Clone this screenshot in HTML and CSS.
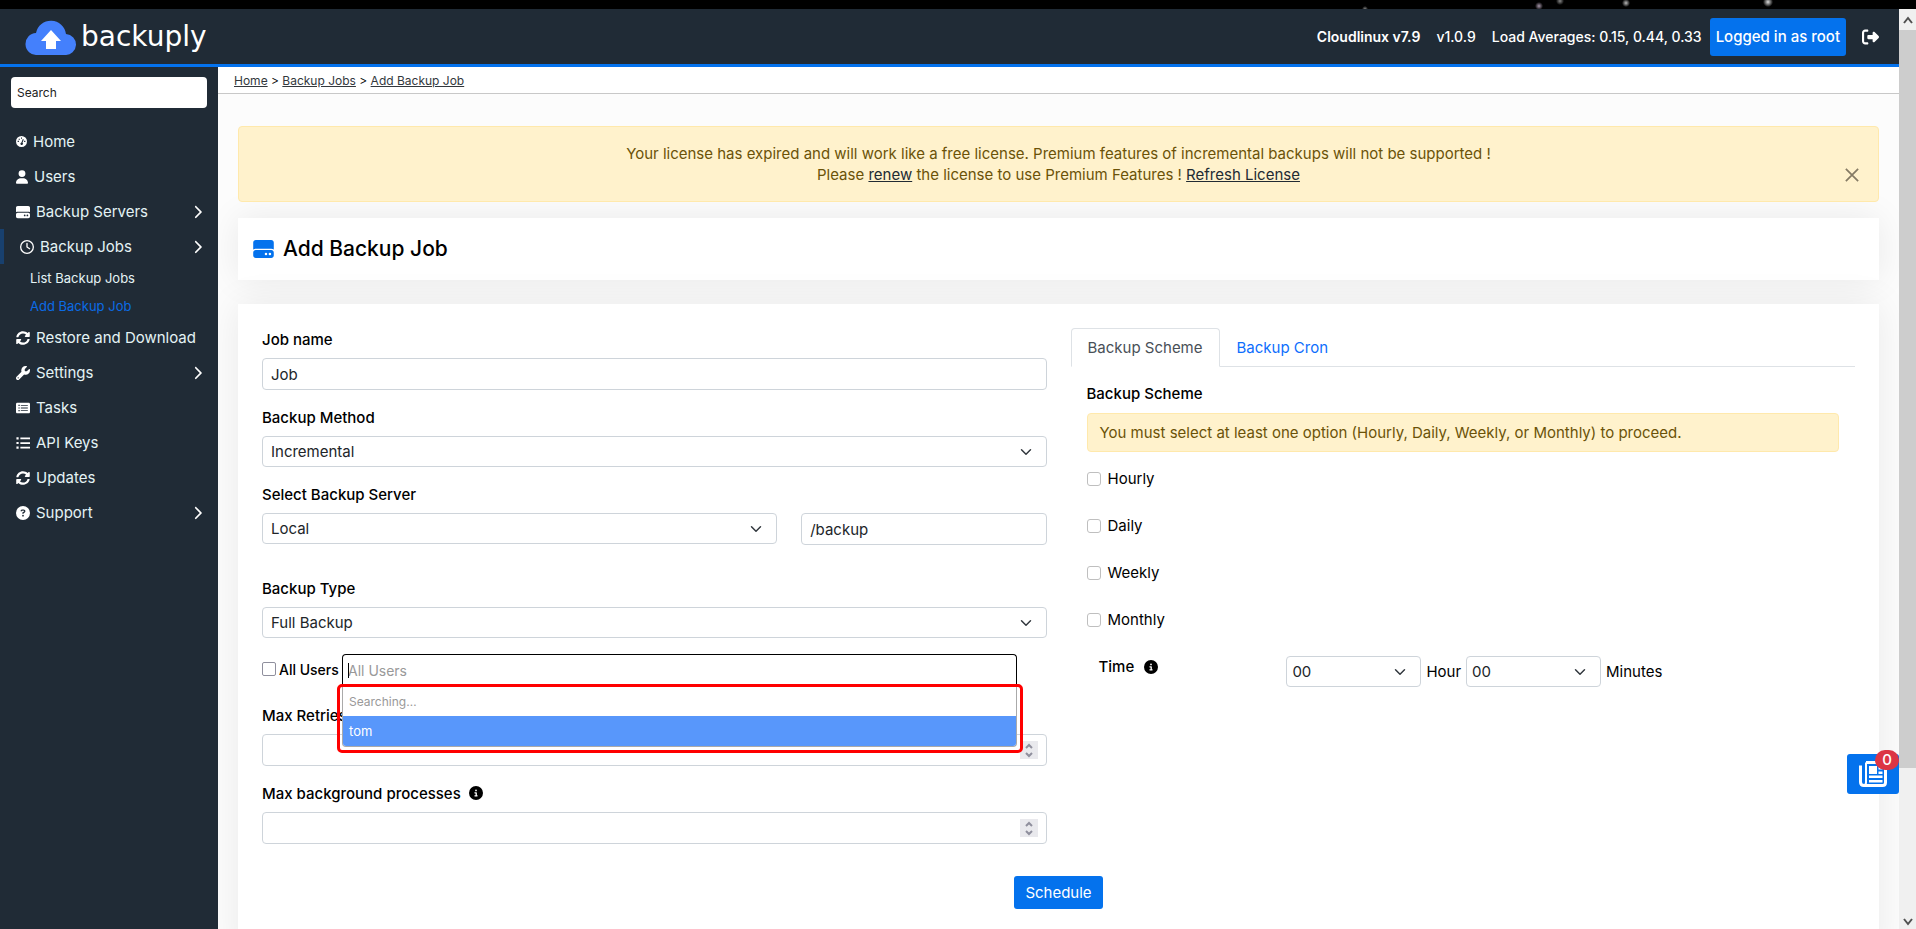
FILE: index.html
```html
<!DOCTYPE html>
<html lang="en">
<head>
<meta charset="utf-8">
<title>Backuply - Add Backup Job</title>
<link rel="stylesheet" href="styles.css">
</head>
<body>
<svg class="defs" aria-hidden="true">
  <symbol id="i-gauge" viewBox="0 0 512 512"><path fill-rule="evenodd" d="M256 0a256 256 0 1 0 0 512 256 256 0 1 0 0-512zM232 70h48v60h-48zM76 226h60v56H76zM376 226h60v56h-60zM124 124h56v56h-56zM318 140l44 22-58 150a60 60 0 1 1-52-12z"/></symbol>
  <symbol id="i-user" viewBox="0 0 448 512"><path d="M224 256A128 128 0 1 0 224 0a128 128 0 1 0 0 256zm-45.700 48C79.800 304 0 383.800 0 482.300C0 498.700 13.300 512 29.700 512l388.600 0c16.400 0 29.700-13.300 29.700-29.700C448 383.800 368.200 304 269.700 304l-91.400 0z"/></symbol>
  <symbol id="i-drive" viewBox="0 0 512 448"><path fill-rule="evenodd" d="M64 0h384c35 0 64 29 64 64v170c-18-12-40-18-64-18H64c-24 0-46 6-64 18V64C0 29 29 0 64 0zM64 248h384c35 0 64 29 64 64v72c0 35-29 64-64 64H64c-35 0-64-29-64-64v-72c0-35 29-64 64-64zM318 316a32 32 0 1 0 0 64 32 32 0 1 0 0-64zM416 316a32 32 0 1 0 0 64 32 32 0 1 0 0-64z"/></symbol>
  <symbol id="i-clock" viewBox="0 0 512 512"><path d="M464 256A208 208 0 1 1 48 256a208 208 0 1 1 416 0zM0 256a256 256 0 1 0 512 0A256 256 0 1 0 0 256zM232 120l0 136c0 8 4 15.500 10.700 20l96 64c11 7.400 25.900 4.400 33.300-6.700s4.400-25.900-6.700-33.300L280 243.200 280 120c0-13.300-10.700-24-24-24s-24 10.700-24 24z"/></symbol>
  <symbol id="i-sync" viewBox="0 0 512 512"><path d="M370.720 133.280C339.458 104.008 298.888 87.962 255.848 88c-77.458.068-144.328 53.178-162.791 126.850-1.344 5.363-6.122 9.150-11.651 9.150H24.103c-7.498 0-13.194-6.807-11.807-14.176C33.933 94.924 134.813 8 256 8c66.448 0 126.791 26.136 171.315 68.685L463.030 40.970C478.149 25.851 504 36.559 504 57.941V192c0 13.255-10.745 24-24 24H345.941c-21.382 0-32.090-25.851-16.971-40.971l41.750-41.749zM32 296h134.059c21.382 0 32.090 25.851 16.971 40.971l-41.750 41.750c31.262 29.273 71.835 45.319 114.876 45.280 77.418-.070 144.315-53.144 162.787-126.849 1.344-5.363 6.122-9.150 11.651-9.150h57.304c7.498 0 13.194 6.807 11.807 14.176C478.067 417.076 377.187 504 256 504c-66.448 0-126.791-26.136-171.315-68.685L48.970 471.030C33.851 486.149 8 475.441 8 454.059V320c0-13.255 10.745-24 24-24z"/></symbol>
  <symbol id="i-wrench" viewBox="0 0 512 512"><path d="M352 320c88.400 0 160-71.600 160-160c0-15.300-2.200-30.100-6.200-44.200c-3.100-10.800-16.400-13.200-24.300-5.300l-76.800 76.800c-3 3-7.100 4.700-11.300 4.700L336 192c-8.800 0-16-7.200-16-16l0-57.400c0-4.200 1.700-8.300 4.700-11.300l76.800-76.800c7.900-7.900 5.400-21.200-5.300-24.300C382.100 2.200 367.300 0 352 0C263.600 0 192 71.600 192 160c0 19.100 3.400 37.500 9.500 54.500L19.900 396.100C7.200 408.800 0 426.100 0 444.100C0 481.600 30.400 512 67.900 512c18 0 35.300-7.200 48-19.900L297.500 310.500c17 6.200 35.400 9.500 54.500 9.500zM80 408a24 24 0 1 1 0 48 24 24 0 1 1 0-48z"/></symbol>
  <symbol id="i-tasks" viewBox="0 0 512 512"><path fill-rule="evenodd" d="M48 64h416c27 0 48 21 48 48v288c0 27-21 48-48 48H48c-27 0-48-21-48-48V112c0-27 21-48 48-48zM88 140v44h48v-44zM176 146v32h256v-32zM88 234v44h48v-44zM176 240v32h256v-32zM88 328v44h48v-44zM176 334v32h256v-32z"/></symbol>
  <symbol id="i-list" viewBox="0 0 512 512"><path d="M16 48h80v80H16zM160 56h352v64H160zM16 216h80v80H16zM160 224h352v64H160zM16 384h80v80H16zM160 392h352v64H160z"/></symbol>
  <symbol id="i-question" viewBox="0 0 512 512"><path d="M256 512A256 256 0 1 0 256 0a256 256 0 1 0 0 512zM169.800 165.300c7.900-22.300 29.100-37.300 52.800-37.300l58.300 0c34.900 0 63.100 28.300 63.100 63.100c0 22.600-12.100 43.500-31.700 54.800L280 264.400c-.2 13-10.900 23.600-24 23.600c-13.300 0-24-10.700-24-24l0-13.500c0-8.600 4.600-16.500 12.100-20.800l44.300-25.400c4.700-2.700 7.600-7.700 7.600-13.100c0-8.400-6.800-15.100-15.100-15.100l-58.300 0c-3.400 0-6.400 2.100-7.500 5.300l-.4 1.200c-4.400 12.500-18.200 19-30.600 14.600s-19-18.200-14.600-30.600l.4-1.200zM224 352a32 32 0 1 1 64 0 32 32 0 1 1 -64 0z"/></symbol>
  <symbol id="i-info" viewBox="0 0 512 512"><path d="M256 512A256 256 0 1 0 256 0a256 256 0 1 0 0 512zM216 336l24 0 0-64-24 0c-13.300 0-24-10.700-24-24s10.700-24 24-24l48 0c13.300 0 24 10.700 24 24l0 88 8 0c13.300 0 24 10.700 24 24s-10.700 24-24 24l-80 0c-13.300 0-24-10.700-24-24s10.700-24 24-24zm40-208a32 32 0 1 1 0 64 32 32 0 1 1 0-64z"/></symbol>
  <symbol id="i-chevron" viewBox="0 0 320 512"><path d="M310.600 233.400c12.500 12.500 12.500 32.800 0 45.300l-192 192c-12.500 12.500-32.800 12.500-45.300 0s-12.500-32.800 0-45.300L242.700 256 73.400 86.600c-12.500-12.500-12.500-32.800 0-45.300s32.800-12.500 45.300 0l192 192z"/></symbol>
  <symbol id="i-exit" viewBox="0 0 512 512"><path d="M377.900 105.900L500.700 228.700c7.200 7.200 11.300 17.100 11.300 27.300s-4.100 20.100-11.300 27.300L377.900 406.100c-6.400 6.400-15 9.900-24 9.900c-18.700 0-33.900-15.200-33.900-33.900l0-62.100-128 0c-17.700 0-32-14.300-32-32l0-64c0-17.700 14.300-32 32-32l128 0 0-62.100c0-18.700 15.200-33.900 33.900-33.900c9 0 17.600 3.600 24 9.900zM160 96L96 96c-17.700 0-32 14.300-32 32l0 256c0 17.700 14.300 32 32 32l64 0c17.700 0 32 14.300 32 32s-14.300 32-32 32l-64 0c-53 0-96-43-96-96L0 128C0 75 43 32 96 32l64 0c17.700 0 32 14.300 32 32s-14.300 32-32 32z"/></symbol>
  <symbol id="i-spin" viewBox="0 0 18 18"><path fill="none" stroke="#8f8f9d" stroke-width="2" d="M6 7l3-3 3 3M6 12l3 3 3-3"/></symbol>
</svg>
<div class="backdrop"></div>
<div class="window">
  <div class="app">
    <header class="topbar">
      <a class="brand" href="#">
        <svg class="brand-mark" viewBox="0 0 52 36" aria-hidden="true"><path fill="#4480fc" d="M12 36a11 11 0 0 1-1-22 15.200 15.200 0 0 1 30 1 10.500 10.500 0 0 1-1 21z"/><path fill="#fff" d="M26 11 36 22h-5v8h-10v-8h-5z"/></svg>
        <span>backuply</span>
      </a>
      <div class="status">
        <strong>Cloudlinux v7.9</strong>
        <span class="version">v1.0.9</span>
        <span class="load">Load Averages: 0.15, 0.44, 0.33</span>
        <button class="btn user-btn" type="button">Logged in as root</button>
        <a class="logout" href="#" aria-label="Log out"><svg><use href="#i-exit"/></svg></a>
      </div>
    </header>
    <div class="body">
      <nav class="sidebar">
        <input class="search" type="search" placeholder="Search" aria-label="Search">
        <ul class="menu">
          <li><a href="#"><svg class="w10"><use href="#i-gauge"/></svg>Home</a></li>
          <li><a href="#"><svg class="w12"><use href="#i-user"/></svg>Users</a></li>
          <li><a href="#"><svg><use href="#i-drive"/></svg>Backup Servers<svg class="chev"><use href="#i-chevron"/></svg></a></li>
          <li><a class="active" href="#"><svg><use href="#i-clock"/></svg>Backup Jobs<svg class="chev"><use href="#i-chevron"/></svg></a>
            <ul class="submenu">
              <li><a href="#">List Backup Jobs</a></li>
              <li><a class="current" href="#">Add Backup Job</a></li>
            </ul>
          </li>
          <li><a href="#"><svg><use href="#i-sync"/></svg>Restore and Download</a></li>
          <li><a href="#"><svg><use href="#i-wrench"/></svg>Settings<svg class="chev"><use href="#i-chevron"/></svg></a></li>
          <li><a href="#"><svg><use href="#i-tasks"/></svg>Tasks</a></li>
          <li><a href="#"><svg><use href="#i-list"/></svg>API Keys</a></li>
          <li><a href="#"><svg><use href="#i-sync"/></svg>Updates</a></li>
          <li><a href="#"><svg><use href="#i-question"/></svg>Support<svg class="chev"><use href="#i-chevron"/></svg></a></li>
        </ul>
      </nav>
      <main class="main">
        <div class="crumbs"><a href="#">Home</a> &gt; <a href="#">Backup Jobs</a> &gt; <a href="#">Add Backup Job</a></div>
        <div class="content">
          <div class="alert license">
            <p>Your license has expired and will work like a free license. Premium features of incremental backups will not be supported !<br>Please <a href="#">renew</a> the license to use Premium Features ! <a href="#">Refresh License</a></p>
            <button class="close" type="button" aria-label="Close"><svg viewBox="0 0 16 16"><path d="M1 1l14 14M15 1L1 15"/></svg></button>
          </div>
          <section class="card title-card">
            <svg><use href="#i-drive"/></svg>
            <h1>Add Backup Job</h1>
          </section>
          <form class="card form-card">
            <div class="columns">
              <div class="col">
                <div class="field">
                  <label for="job">Job name</label>
                  <input class="control" id="job" type="text" value="Job">
                </div>
                <div class="field">
                  <label for="method">Backup Method</label>
                  <select class="control" id="method"><option>Incremental</option></select>
                </div>
                <div class="field server">
                  <label for="server">Select Backup Server</label>
                  <div class="server-row">
                    <select class="control" id="server"><option>Local</option></select>
                    <input class="control" type="text" value="/backup" aria-label="Backup path">
                  </div>
                </div>
                <div class="field">
                  <label for="type">Backup Type</label>
                  <select class="control" id="type"><option>Full Backup</option></select>
                </div>
                <div class="users-row">
                  <label class="all-users"><input type="checkbox">All Users</label>
                  <div class="picker">
                    <input class="picker-input" type="text" placeholder="All Users" aria-label="Users">
                    <span class="caret"></span>
                    <ul class="results" role="listbox">
                      <li class="searching">Searching…</li>
                      <li class="hit" role="option" aria-selected="true">tom</li>
                    </ul>
                    <div class="marker"></div>
                  </div>
                </div>
                <div class="field">
                  <label for="retries">Max Retries</label>
                  <div class="number"><input class="control" id="retries" type="number"><svg><use href="#i-spin"/></svg></div>
                </div>
                <div class="field">
                  <label for="procs">Max background processes <svg class="info"><use href="#i-info"/></svg></label>
                  <div class="number"><input class="control" id="procs" type="number"><svg><use href="#i-spin"/></svg></div>
                </div>
              </div>
              <div class="col">
                <div class="tabs">
                  <button class="tab on" type="button">Backup Scheme</button>
                  <button class="tab" type="button">Backup Cron</button>
                </div>
                <div class="pane">
                  <h2>Backup Scheme</h2>
                  <div class="alert notice">You must select at least one option (Hourly, Daily, Weekly, or Monthly) to proceed.</div>
                  <div class="checks">
                    <label><input type="checkbox">Hourly</label>
                    <label><input type="checkbox">Daily</label>
                    <label><input type="checkbox">Weekly</label>
                    <label><input type="checkbox">Monthly</label>
                  </div>
                  <div class="time-row">
                    <span class="time-label">Time <svg class="info"><use href="#i-info"/></svg></span>
                    <div class="time-fields">
                      <select class="control" id="hour"><option>00</option></select>
                      <label for="hour">Hour</label>
                      <select class="control" id="minute"><option>00</option></select>
                      <label for="minute">Minutes</label>
                    </div>
                  </div>
                </div>
              </div>
            </div>
            <div class="actions"><button class="btn" type="button">Schedule</button></div>
          </form>
        </div>
        <button class="news" type="button" aria-label="News">
          <svg viewBox="0 0 28 26"><g fill="none" stroke="#fff" stroke-width="3"><path d="M7 1.500h16.500q3 0 3 3v17q0 3-3 3H5q-3.500 0-3.500-3.500V4.500"/><path d="M7 1.500v20q0 3-3 3" stroke-width="2"/></g><path fill="#fff" d="M10 5h8v8h-8zM19.500 6h4v2.500h-4zM19.500 10.500h4V13h-4zM10 14.500h13.500V17H10zM10 19h13.500v2.500H10z"/></svg>
          <span class="badge">0</span>
        </button>
      </main>
    </div>
  </div>
  <div class="scrollbar" aria-hidden="true">
    <svg viewBox="0 0 17 21"><path d="M5 14l4-5 4 5"/></svg>
    <div class="thumb"></div>
    <div class="track"></div>
    <svg viewBox="0 0 17 21"><path d="M5 11l4 5 4-5"/></svg>
  </div>
</div>
</body>
</html>
```
FILE: styles.css
```css
* { box-sizing: border-box; }

body {
  margin: 0;
  height: 100vh;
  overflow: hidden;
  display: flex;
  flex-direction: column;
  background: #fcfcfc;
  color: #000;
  font: 15px/21px Inter, "Open Sans", sans-serif;
}

input, select, button { font: inherit; color: inherit; margin: 0; }
ul { list-style: none; margin: 0; padding: 0; }
svg { display: block; fill: currentColor; flex: none; }
.defs { position: absolute; width: 0; height: 0; }

.backdrop {
  flex: none;
  height: 9px;
  background:
    radial-gradient(circle at 1365px 9px, #888, transparent 3px),
    radial-gradient(circle at 1539px 6px, #a898ac, transparent 4px),
    radial-gradient(circle at 1560px 1px, #888, transparent 4px),
    radial-gradient(circle at 1626px 3px, #bbb, transparent 4px),
    radial-gradient(circle at 1768px 2px, #ddd, transparent 5px),
    #000;
}

.window { flex: 1; min-height: 0; display: flex; }
.app { flex: 1; min-width: 0; display: flex; flex-direction: column; }

.topbar {
  flex: none;
  height: 58px;
  display: flex;
  align-items: center;
  justify-content: space-between;
  padding: 0 20px 0 25px;
  background: #202b36;
  border-bottom: 3px solid #0472ed;
  color: #fff;
}
.brand {
  display: flex;
  align-items: center;
  gap: 4px;
  color: #fff;
  text-decoration: none;
  font: 28px/36px "DejaVu Sans", sans-serif;
}
.brand-mark { width: 52px; height: 36px; }
.status { display: flex; align-items: center; font-size: 14px; font-weight: 500; }
.status strong { font-weight: 600; }
.version { margin-left: 16px; }
.load { margin: 0 8px 0 16px; }
.btn {
  border: 0;
  border-radius: 3px;
  background: #0472ed;
  color: #fff;
  padding: 6px 11px;
}
.user-btn { padding: 8px 6px; height: 38px; font-size: 15px; font-weight: 500; }
.logout { margin-left: 16px; color: #fff; }
.logout svg { width: 17px; height: 18px; }

.body { flex: 1; min-height: 0; display: flex; }

.sidebar { flex: none; width: 218px; background: #202b36; padding-top: 10px; }
.search {
  display: block;
  width: 196px;
  height: 31px;
  margin: 0 11px 16px;
  padding: 0 6px;
  border: 0;
  border-radius: 4px;
  background: #fff;
  font-size: 12px;
}
.search::placeholder { color: #222; opacity: 1; }
.menu a {
  display: flex;
  align-items: center;
  gap: 6px;
  height: 35px;
  padding: 0 16px;
  color: #e4f3f5;
  text-decoration: none;
}
.menu svg { width: 14px; height: 14px; color: #fff; }
.menu .w10 { width: 11px; height: 11px; }
.menu .w12 { width: 12px; }
.menu .chev { width: 9px; height: 14px; margin-left: auto; }
.menu .active { border-left: 4px solid #18406e; }
.submenu a { height: 28px; padding-left: 30px; font-size: 13px; }
.submenu .current { color: #0b6be6; }

.main { flex: 1; min-width: 0; position: relative; overflow: hidden; }
.crumbs {
  height: 27px;
  padding: 3px 16px;
  background: #fff;
  border-bottom: 1px solid #c8c8c8;
  font-size: 12px;
}
.crumbs a { color: #33383d; }
.content { padding: 32px 20px 0; }

.alert {
  background: #fff2cc;
  border: 1px solid #ffe9ac;
  border-radius: 4px;
  color: #6b5208;
}
.license {
  display: flex;
  align-items: center;
  justify-content: center;
  position: relative;
  padding: 16px 48px;
  height: 76px;
  text-align: center;
}
.license p { margin: 0; }
.license a { color: #222b33; }
.close {
  position: absolute;
  right: 19px;
  top: 41px;
  padding: 0;
  border: 0;
  background: none;
}
.close svg { width: 14px; height: 14px; }
.close path { stroke: #857b64; stroke-width: 2; }

.card { background: #fff; box-shadow: 0 0 35px 0 rgba(0, 0, 0, .08); }
.title-card {
  display: flex;
  align-items: center;
  gap: 9px;
  height: 62px;
  margin: 16px 0 24px;
  padding: 0 15px;
}
.title-card svg { width: 21px; height: 18px; color: #0472ed; }
h1 { margin: 0; font-size: 21px; line-height: 24px; font-weight: 500; }
.form-card { padding: 24px 24px 48px; }
.columns { display: grid; grid-template-columns: 1fr 1fr; gap: 24px; }

.field { margin-bottom: 16px; }
.field label {
  display: flex;
  align-items: center;
  gap: 8px;
  height: 22px;
  margin-bottom: 8px;
  font-weight: 500;
}
.info { width: 14px; height: 14px; }
.control {
  display: block;
  width: 100%;
  height: 32px;
  padding: 0 8px;
  border: 1px solid #ced4da;
  border-radius: 4px;
  background: #fff;
  color: #212529;
}
select.control {
  appearance: none;
  height: 31px;
  background: #fff url("data:image/svg+xml,%3Csvg xmlns='http://www.w3.org/2000/svg' viewBox='0 0 16 16'%3E%3Cpath fill='none' stroke='%23343a40' stroke-linecap='round' stroke-linejoin='round' stroke-width='2' d='m2 5 6 6 6-6'/%3E%3C/svg%3E") no-repeat right 14px center / 12px 12px;
}
.server { margin-bottom: 32px; }
.server-row { display: grid; grid-template-columns: 21fr 10fr; gap: 24px; }

input[type=checkbox] {
  appearance: none;
  flex: none;
  width: 14px;
  height: 14px;
  border: 1px solid #bfbfbf;
  border-radius: 3px;
  background: #fff;
}
.users-row { display: flex; height: 32px; gap: 4px; margin-bottom: 18px; }
.all-users { display: flex; align-items: center; gap: 3px; height: 30px; width: 76px; font-size: 14px; font-weight: 500; white-space: nowrap; }
.all-users input[type=checkbox] { border-color: #8f8f9d; border-radius: 2px; }
.picker { position: relative; flex: 1; margin-right: 30px; }
.picker-input {
  width: 100%;
  height: 32px;
  padding: 0 5px;
  border: 1px solid #000;
  border-bottom: 0;
  border-radius: 4px 4px 0 0;
  background: #fff;
  font-size: 14px;
  outline: 0;
}
.picker-input::placeholder { color: #999; opacity: 1; }
.caret { position: absolute; left: 6px; top: 9px; width: 1px; height: 15px; background: #000; }
.results {
  position: absolute;
  z-index: 2;
  left: 0;
  right: 0;
  top: 32px;
  background: #fff;
  border: 1px solid #aaa;
  border-top: 0;
  border-radius: 0 0 4px 4px;
  overflow: hidden;
  font-size: 12px;
}
.results li { height: 30px; padding: 0 6px; line-height: 31px; }
.searching { color: #999; }
.results .hit { background: #5897fb; color: #fff; font-size: 13px; }
.marker {
  position: absolute;
  z-index: 3;
  left: -5px;
  right: -6px;
  top: 30px;
  height: 69px;
  border: 3px solid #f00;
  border-radius: 5px;
}

.number { position: relative; }
.number input { appearance: textfield; }
.number svg { position: absolute; right: 9px; top: 7px; width: 18px; height: 18px; background: #e9e9ed; }

.tabs { display: flex; border-bottom: 1px solid #dee2e6; }
.tab {
  height: 38px;
  padding: 0 16px;
  border: 1px solid transparent;
  background: none;
  color: #0d6efd;
}
.tab.on {
  height: 39px;
  margin-bottom: -1px;
  border-color: #dee2e6 #dee2e6 #fff;
  border-radius: 4px 4px 0 0;
  background: #fff;
  color: #495057;
}
.pane { padding: 16px; }
h2 { margin: 0 0 8px; font-size: 15px; line-height: 22px; font-weight: 500; }
.notice { padding: 8px 12px; }
.checks { display: grid; gap: 26px; margin-top: 16px; }
.checks label { display: flex; align-items: center; gap: 7px; }
.time-row { display: grid; grid-template-columns: 34fr 100fr; margin-top: 26px; padding-left: 12px; }
.time-label { display: flex; align-items: center; gap: 10px; height: 21px; font-weight: 500; }
.time-fields { display: flex; align-items: center; gap: 5px; }
.time-fields .control { width: 135px; padding: 0 5px; }

.actions { display: flex; justify-content: center; margin-top: 16px; }

.news {
  position: absolute;
  right: 0;
  bottom: 135px;
  width: 52px;
  height: 40px;
  padding: 0 12px;
  border: 0;
  border-radius: 3px;
  background: #0472ed;
}
.news svg { width: 28px; height: 26px; }
.badge {
  position: absolute;
  right: 0;
  top: -4px;
  width: 24px;
  height: 20px;
  border-radius: 10px;
  background: #dc3545;
  color: #fff;
  font-weight: 500;
  line-height: 20px;
}

.scrollbar { flex: none; width: 17px; display: flex; flex-direction: column; background: #f0f0f0; }
.scrollbar svg { width: 17px; height: 21px; }
.scrollbar path { fill: none; stroke: #505050; stroke-width: 2; }
.thumb { flex: 84; background: #cdcdcd; }
.track { flex: 16; }
```
